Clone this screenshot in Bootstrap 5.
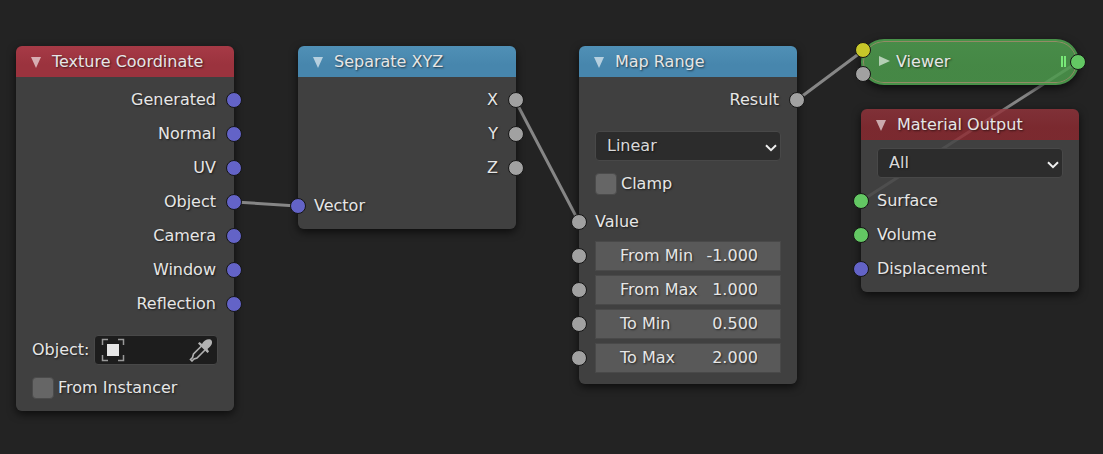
<!DOCTYPE html>
<html lang="en">
<head>
<meta charset="utf-8">
<meta name="viewport" content="width=device-width, initial-scale=1">
<title>Shader Node Editor</title>
<link href="https://cdn.jsdelivr.net/npm/bootstrap@5.3.0/dist/css/bootstrap.min.css" rel="stylesheet">
<style>
  body { background: #232323; color: #e6e6e6; font: 16px/34px "DejaVu Sans", sans-serif; }
  .canvas { min-height: 100vh; overflow: hidden; text-shadow: 1px 1px 2px rgba(0,0,0,.6); }
  .wires { left: 0; top: 0; stroke: #868686; stroke-width: 3; fill: none; pointer-events: none; }

  /* Nodes are placed freely on the canvas */
  .node { position: absolute; width: 218px; border-radius: 6px; box-shadow: 0 3px 9px rgba(0,0,0,.65); }
  .node-texture { left: 16px; top: 46px; }
  .node-separate { left: 298px; top: 46px; }
  .node-range { left: 579px; top: 46px; }
  .node-output { left: 861px; top: 109px; }
  .node-viewer { left: 861px; top: 39px; }

  .node-head { height: 31px; padding: 0 14px; gap: 10px; border-radius: 6px 6px 0 0; }
  .node-title { font-size: 16px; line-height: 31px; font-weight: 400; }
  .head-input { background: linear-gradient(#a63a46, #9b333e 60%); }
  .head-convert { background: linear-gradient(#5090b6, #4786ad 60%); }
  .head-output { background: linear-gradient(rgba(148,52,60,.82), rgba(142,43,50,.82) 60%); }
  .node-body { display: flow-root; padding: 6px 16px; background: #404040; border-radius: 0 0 6px 6px; }
  .node-output .node-body { background: rgba(69,69,69,.86); padding-top: 8px; }
  .node-range .node-body { padding-bottom: 9px; }
  .node-texture .node-body { padding-bottom: 2px; }
  .fold { width: 12px; height: 12px; color: rgba(255,255,255,.6); }
  .fold svg { display: block; }

  .socket-row { position: relative; height: 34px; padding: 0 2px 0 0; }
  .socket { position: absolute; top: 9px; width: 16px; height: 16px; border: 1px solid #151515; border-radius: 50%; background: #a1a1a1; }
  .socket.in { left: -24px; }
  .socket.out { right: -24px; }
  .socket.vector { background: #6363c7; }
  .socket.shader { background: #63c763; }
  .socket.color { background: #c7c729; }

  .pick { height: 30px; padding: 0 11px; border: 1px solid #484848; border-radius: 4px; color: #d9d9d9; text-shadow: inherit; appearance: none; line-height: 28px;
    background: #2c2c2c url("data:image/svg+xml,%3Csvg xmlns='http://www.w3.org/2000/svg' width='12' height='8'%3E%3Cpath d='M1 1.2l5 5 5-5' fill='none' stroke='%23eee' stroke-width='2'/%3E%3C/svg%3E") no-repeat right 3px top 12px; }
  .pick-spaced { margin-top: 14px; }
  .pick-tight { margin-bottom: 6px; }
  .tick { width: 22px; height: 22px; appearance: none; background: #666; border: 1px solid #4b4b4b; border-radius: 4px; }
  .tick:checked { background: #4772b3; }
  .tick-row { line-height: 22px; gap: 4px; padding: 12px 0 10px; }
  .object-row { margin-top: 14px; gap: 4px; line-height: 30px; }
  .object-field { height: 30px; border: 1px solid #484848; border-radius: 4px; background: #1d1d1d; padding: 0 4px 0 6px; }
  .plain-input { min-width: 0; padding: 0; border: 0; background: none; color: inherit; text-shadow: inherit; outline: 0; }
  .number { height: 30px; padding: 0 22px 0 24px; background: #595959; border: 1px solid #494949; line-height: 28px; }
  .number-row { padding: 2px 0; }
  .number-row label { white-space: nowrap; }

  .node-viewer { border-radius: 23px; }
  .viewer-pill { height: 46px; padding: 0 11px 2px 15px; border: 2px solid #489249; border-radius: 23px; background: linear-gradient(rgba(79,160,80,.84), rgba(76,155,76,.84) 60%); box-shadow: inset 0 0 0 1px #938a66; gap: 6px; }
  .viewer-pill .in { left: -8px; top: 1px; }
  .viewer-pill .in + .in { top: 25px; }
  .viewer-pill .out { right: -9px; top: 13px; }
  .grip { width: 5px; height: 11px; border: solid #78e978; border-width: 0 2px; }
</style>
</head>
<body>
<main class="canvas position-relative">
  <svg class="wires position-absolute w-100 h-100" aria-hidden="true">
    <path d="M235 202L297 206M515 100L579 222M797 100L864 50M1078 62L861 201"/>
  </svg>

  <section class="node node-texture">
    <header class="node-head head-input d-flex align-items-center">
      <button class="fold btn p-0 border-0" aria-label="Collapse"><svg width="12" height="12"><path d="M1 1h10L6 12z" fill="currentColor"/></svg></button>
      <h2 class="node-title m-0">Texture Coordinate</h2>
    </header>
    <div class="node-body">
      <div class="socket-row text-end">Generated<i class="socket out vector"></i></div>
      <div class="socket-row text-end">Normal<i class="socket out vector"></i></div>
      <div class="socket-row text-end">UV<i class="socket out vector"></i></div>
      <div class="socket-row text-end">Object<i class="socket out vector"></i></div>
      <div class="socket-row text-end">Camera<i class="socket out vector"></i></div>
      <div class="socket-row text-end">Window<i class="socket out vector"></i></div>
      <div class="socket-row text-end">Reflection<i class="socket out vector"></i></div>
      <div class="object-row d-flex">
        <label for="object">Object:</label>
        <div class="object-field d-flex align-items-center flex-fill overflow-hidden">
          <svg class="flex-shrink-0" width="24" height="24" aria-hidden="true"><path d="M7 1.500H1.500V7M17 1.500h5.500V7M7 22.500H1.500V17M17 22.500h5.500V17" fill="none" stroke="#999" stroke-width="1.500"/><path d="M6 6h12v12H6z" fill="#e6e6e6"/></svg>
          <input class="plain-input flex-fill w-50" id="object" type="text">
          <button class="btn p-0 border-0 lh-1" aria-label="Pick object"><svg class="d-block" width="24" height="24"><path d="M12.500 8L4.500 16l-1 3.500-2 2 1.500 1.500 2-2 3-1L16 12" fill="none" stroke="#b0b0b0" stroke-width="1.600"/><path d="M9 5.500l1.500-1.500 2.500 2C14.500 3 17.500 1 20.500 1.200c2.500.3 3 2.800 2.200 5C21.500 8.500 20 9.500 18.500 11l1.500 2.500-1.500 1.500z" fill="#b3b3b3"/></svg></button>
        </div>
      </div>
      <div class="tick-row d-flex"><input class="tick m-0" type="checkbox" id="instancer"><label for="instancer">From Instancer</label></div>
    </div>
  </section>

  <section class="node node-separate">
    <header class="node-head head-convert d-flex align-items-center">
      <button class="fold btn p-0 border-0" aria-label="Collapse"><svg width="12" height="12"><path d="M1 1h10L6 12z" fill="currentColor"/></svg></button>
      <h2 class="node-title m-0">Separate XYZ</h2>
    </header>
    <div class="node-body">
      <div class="socket-row text-end">X<i class="socket out"></i></div>
      <div class="socket-row text-end">Y<i class="socket out"></i></div>
      <div class="socket-row text-end">Z<i class="socket out"></i></div>
      <div class="socket-row mt-1"><i class="socket in vector"></i>Vector</div>
    </div>
  </section>

  <section class="node node-range">
    <header class="node-head head-convert d-flex align-items-center">
      <button class="fold btn p-0 border-0" aria-label="Collapse"><svg width="12" height="12"><path d="M1 1h10L6 12z" fill="currentColor"/></svg></button>
      <h2 class="node-title m-0">Map Range</h2>
    </header>
    <div class="node-body">
      <div class="socket-row text-end">Result<i class="socket out"></i></div>
      <select class="pick pick-spaced w-100 d-block" aria-label="Interpolation"><option>Linear</option><option>Stepped Linear</option></select>
      <div class="tick-row d-flex"><input class="tick m-0" type="checkbox" id="clamp"><label for="clamp">Clamp</label></div>
      <div class="socket-row"><i class="socket in"></i>Value</div>
      <div class="socket-row number-row"><i class="socket in"></i><div class="number d-flex"><label for="fmin">From Min</label><input class="plain-input flex-fill w-25 text-end" id="fmin" value="-1.000"></div></div>
      <div class="socket-row number-row"><i class="socket in"></i><div class="number d-flex"><label for="fmax">From Max</label><input class="plain-input flex-fill w-25 text-end" id="fmax" value="1.000"></div></div>
      <div class="socket-row number-row"><i class="socket in"></i><div class="number d-flex"><label for="tmin">To Min</label><input class="plain-input flex-fill w-25 text-end" id="tmin" value="0.500"></div></div>
      <div class="socket-row number-row"><i class="socket in"></i><div class="number d-flex"><label for="tmax">To Max</label><input class="plain-input flex-fill w-25 text-end" id="tmax" value="2.000"></div></div>
    </div>
  </section>

  <section class="node node-viewer">
    <div class="viewer-pill position-relative d-flex align-items-center">
      <i class="socket in color"></i><i class="socket in"></i>
      <button class="fold btn p-0 border-0" aria-label="Expand"><svg width="12" height="12"><path d="M1 1v10l11-5z" fill="currentColor"/></svg></button>
      <h2 class="node-title m-0 me-auto">Viewer</h2>
      <span class="grip"></span>
      <i class="socket out shader"></i>
    </div>
  </section>

  <section class="node node-output">
    <header class="node-head head-output d-flex align-items-center">
      <button class="fold btn p-0 border-0" aria-label="Collapse"><svg width="12" height="12"><path d="M1 1h10L6 12z" fill="currentColor"/></svg></button>
      <h2 class="node-title m-0">Material Output</h2>
    </header>
    <div class="node-body">
      <select class="pick pick-tight w-100 d-block" aria-label="Target"><option>All</option><option>Eevee</option><option>Cycles</option></select>
      <div class="socket-row"><i class="socket in shader"></i>Surface</div>
      <div class="socket-row"><i class="socket in shader"></i>Volume</div>
      <div class="socket-row"><i class="socket in vector"></i>Displacement</div>
    </div>
  </section>
</main>
<script src="https://cdn.jsdelivr.net/npm/bootstrap@5.3.0/dist/js/bootstrap.bundle.min.js"></script>
</body>
</html>
